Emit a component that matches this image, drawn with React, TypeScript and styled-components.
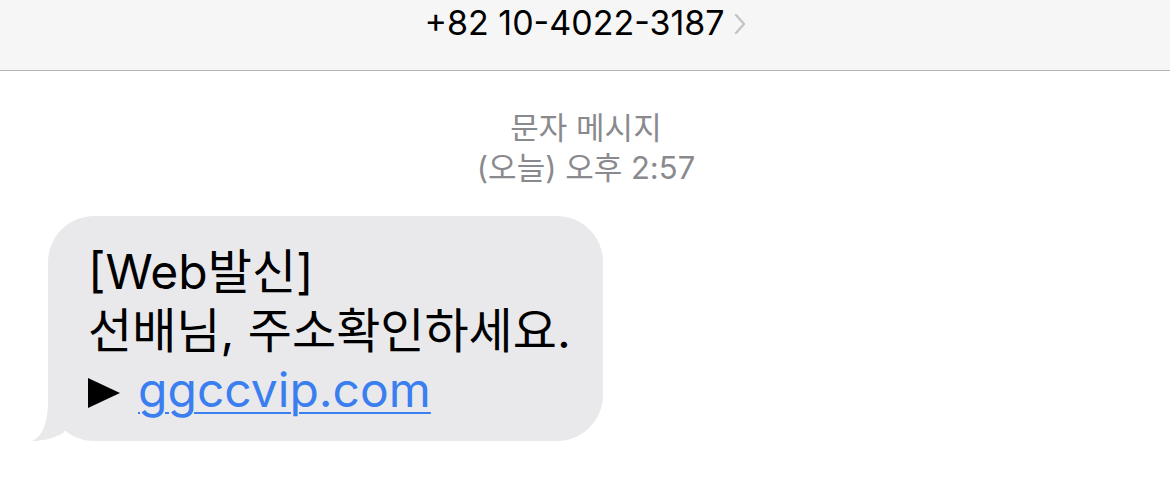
import React from "react";
import styled, { createGlobalStyle } from "styled-components";

const Global = createGlobalStyle`
  html, body { margin: 0; padding: 0; background: #ffffff; }
  body { font-family: Inter, "Noto Sans CJK KR", sans-serif; -webkit-font-smoothing: antialiased; }
`;

const Page = styled.div`
  width: 1170px;
  height: 497px;
  overflow: hidden;
  background: #ffffff;
`;

const Header = styled.header`
  height: 71px;
  box-sizing: border-box;
  background: #f6f6f6;
  border-bottom: 1px solid #b4b4b4;
  display: flex;
  justify-content: center;
  align-items: flex-start;
  padding-top: 1px;
`;

const Contact = styled.div`
  display: flex;
  align-items: center;
  gap: 9px;
  font-size: 34px;
  line-height: 44px;
  color: #000;
`;

const Chevron = styled.svg`
  width: 12px;
  height: 22px;
  margin-top: 2px;
`;

const Stamp = styled.div`
  margin-top: 37px;
  text-align: center;
  color: #8a8a8e;
  font-size: 31px;
  line-height: 40px;
  padding-left: 2px;
`;

const Row = styled.div`
  display: flex;
  padding-left: 48px;
  margin-top: 28px;
`;

const Bubble = styled.div`
  position: relative;
  background: #e9e9eb;
  border-radius: 46px;
  padding: 26px 32px 22px 40px;
  font-size: 48px;
  line-height: 59px;
  color: #000;
`;

const Tail = styled.svg`
  position: absolute;
  left: -17px;
  bottom: 0;
  width: 41px;
  height: 50px;
`;

const Line = styled.div`
  position: relative;
  white-space: nowrap;
`;

const Arrow = styled.span`
  display: inline-block;
  width: 0;
  height: 0;
  border-top: 15px solid transparent;
  border-bottom: 15px solid transparent;
  border-left: 32px solid #000;
  margin-right: 18px;
  vertical-align: -1px;
`;

const Link = styled.a`
  color: #3a7ef0;
  text-decoration: underline;
  text-decoration-thickness: 2px;
  text-underline-offset: 5px;
`;

export default function App() {
  return (
    <Page>
      <Global />
      <Header>
        <Contact>
          <span>+82 10-4022-3187</span>
          <Chevron viewBox="0 0 12 22">
            <path d="M2 2 L10 11 L2 20" fill="none" stroke="#c4c4c7" strokeWidth="2.4" strokeLinecap="round" strokeLinejoin="round" />
          </Chevron>
        </Contact>
      </Header>
      <Stamp>
        <div>문자 메시지</div>
        <div>(오늘) 오후 2:57</div>
      </Stamp>
      <Row>
        <Bubble>
          <Tail viewBox="0 0 41 50">
            <path d="M17 0 L17 10 C17 35 10 46 1 50 C10 50 22 48 32 42 L41 30 L41 0 Z" fill="#e9e9eb" />
          </Tail>
          <Line>[Web발신]</Line>
          <Line>선배님, 주소확인하세요.</Line>
          <Line>
            <Arrow />
            <Link href="#">ggccvip.com</Link>
          </Line>
        </Bubble>
      </Row>
    </Page>
  );
}
